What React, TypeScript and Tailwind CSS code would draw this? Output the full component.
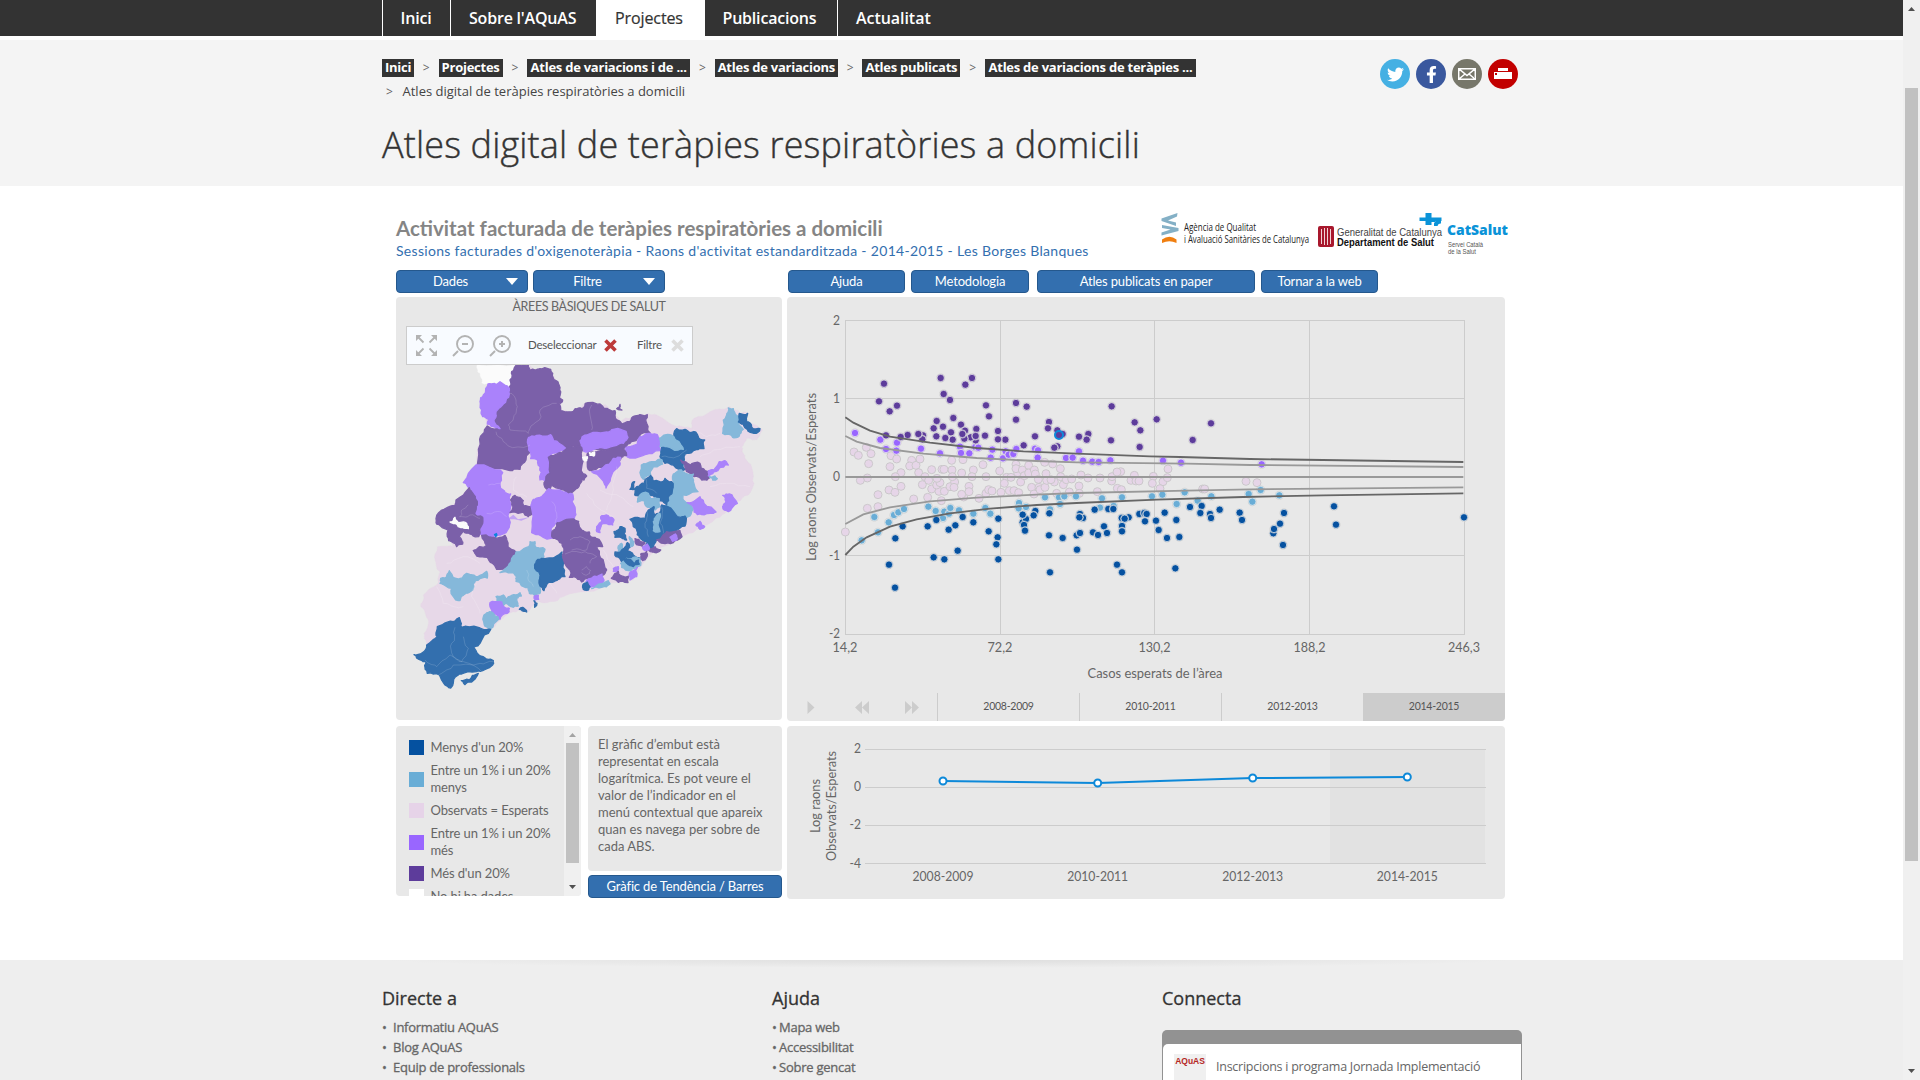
import React from "react";
import { FaTwitter, FaFacebookF } from "react-icons/fa";

const LATO = "font-['Lato','Noto_Sans',sans-serif]";

/* ---------- map ---------- */

const C = {
  navy: "#336fae",
  sky: "#85b8da",
  pink: "#e7d8e8",
  violet: "#aa82fb",
  purple: "#7b60a9",
  white: "#fbfbfb",
};

type Region = [keyof typeof C, string];

const REGIONS: Region[] = [
  ["pink", "262,100 335,60 350,44 385,44 400,60 450,58 465,90 480,115 488,150 484,182 520,184 560,160 600,165 645,185 660,215 700,200 745,190 770,195 830,230 875,235 882,205 930,185 970,178 990,170 1005,180 1020,190 1045,190 1042,215 1080,235 1088,240 1070,270 1040,265 1025,290 1035,325 1055,350 1062,400 1045,435 1010,455 975,490 945,508 900,535 850,558 820,580 760,608 740,628 715,665 700,690 660,700 625,705 560,725 490,740 450,755 410,757 395,770 385,785 360,780 328,790 300,812 272,840 180,860 112,860 80,885 72,850 85,810 62,770 70,735 110,705 120,665 105,630 112,590 160,590 145,540 110,510 130,480 165,460 205,415 190,395 230,340 240,280 260,230 240,160"],
  ["white", "233,44 350,44 335,70 325,112 308,98 262,102 245,98 240,70 233,65"],
  ["purple", "350,44 385,44 390,60 408,60 420,56 452,58 458,70 468,92 476,102 482,125 478,142 488,150 476,162 482,182 502,186 520,184 536,174 552,172 556,160 600,162 612,175 645,182 652,210 666,222 690,214 705,198 742,194 740,220 750,248 720,254 708,272 690,280 670,296 640,300 560,298 505,292 450,268 388,262 386,288 392,298 378,330 360,358 330,362 232,345 238,290 248,252 262,228 290,235 280,215 288,185 315,160 330,120 330,90 335,65"],
  ["violet", "264,102 290,104 300,95 328,115 328,132 310,162 288,185 282,210 300,236 280,230 262,222 266,208 248,200 245,180 240,155 250,135"],
  ["violet", "386,262 410,256 452,254 460,272 500,298 470,308 452,316 445,332 450,360 436,392 420,390 420,350 412,330 392,326 386,300"],
  ["violet", "540,272 560,255 620,246 640,238 678,244 684,262 670,280 640,288 600,292 565,306 545,296"],
  ["violet", "678,292 712,282 720,260 745,250 772,254 778,284 780,302 735,314 690,324 668,312"],
  ["purple", "445,322 478,308 502,290 545,292 550,330 545,395 535,412 515,428 492,420 456,406 444,420 432,398 450,370"],
  ["purple", "565,308 610,302 660,292 680,316 664,322 650,340 610,352 570,362 562,332"],
  ["violet", "575,365 610,352 640,325 662,322 660,345 635,375 618,414 602,384"],
  ["purple", "546,366 560,378 552,390 545,385"],
  ["white", "548,322 562,320 560,332 550,330"],
  ["white", "568,308 584,306 582,318 570,316"],
  ["violet", "228,345 300,360 308,368 300,405 315,428 332,432 330,480 325,492 330,520 318,548 290,558 258,560 240,552 245,510 225,490 232,460 220,432 205,412 190,398"],
  ["purple", "208,413 226,440 232,465 224,490 248,502 248,520 236,560 210,552 190,544 178,560 188,582 170,590 146,572 144,540 110,522 108,506 132,478 165,466 168,450"],
  ["white", "150,516 165,502 175,518 200,520 205,536 188,532 165,520"],
  ["purple", "332,450 345,436 360,442 370,452 372,468 406,466 400,490 385,500 370,486 330,488 340,470"],
  ["violet", "395,475 400,448 425,440 446,416 490,426 518,432 516,455 526,485 522,508 490,512 466,520 454,545 460,562 430,562 395,548"],
  ["purple", "472,518 500,508 536,514 545,540 568,546 572,560 588,565 608,590 590,590 598,614 612,640 620,660 605,676 570,686 545,696 530,684 508,682 510,660 484,636 490,610 486,580 460,565 456,545 470,530"],
  ["purple", "245,556 280,562 315,556 324,590 348,606 335,625 322,652 290,658 278,640 262,622 230,618 220,602 238,590 260,586"],
  ["sky", "348,606 386,590 390,575 405,575 408,592 435,598 430,625 410,648 418,680 416,705 420,730 405,738 388,730 384,712 348,694 350,680 340,668 300,668 325,648 335,625"],
  ["navy", "408,638 425,625 460,624 486,606 490,640 495,680 475,688 462,695 440,704 432,722 420,708 420,676 404,655"],
  ["sky", "122,685 140,680 148,662 158,680 178,686 200,670 228,680 260,664 262,684 226,692 218,720 195,732 180,752 160,740 155,715 120,700"],
  ["sky", "288,740 310,735 320,748 338,735 360,728 364,738 350,745 355,768 340,772 320,760 294,765"],
  ["violet", "270,758 305,756 312,770 328,775 322,790 300,808 288,792 275,790"],
  ["sky", "252,795 268,785 285,797 296,808 272,836 258,830 250,812"],
  ["navy", "112,830 160,815 178,803 184,832 240,834 272,838 240,880 222,892 228,902 250,920 280,932 278,945 248,962 230,965 185,972 165,982 152,1014 130,998 118,975 82,970 75,952 78,935 62,930 42,914 72,905 80,885 112,860"],
  ["navy", "184,992 208,990 235,970 215,996 195,1004"],
  ["navy", "358,778 368,772 380,786 372,784"],
  ["violet", "402,740 415,736 416,748 406,750"],
  ["navy", "402,752 411,760 404,772"],
  ["purple", "650,176 660,163 658,175 666,180"],
  ["sky", "985,174 1000,176 1005,190 1020,200 1015,222 1030,238 1018,258 998,262 968,250 970,210 980,195"],
  ["navy", "1018,190 1043,190 1040,215 1055,232 1080,236 1062,250 1042,238 1030,222 1015,216"],
  ["navy", "830,236 855,238 866,246 890,250 896,264 914,270 912,296 880,302 855,312 850,335 855,358 840,360 820,345 795,340 780,320 785,292 830,290 850,298 820,262"],
  ["sky", "778,265 810,254 828,270 850,298 835,300 800,290 780,290"],
  ["purple", "842,330 872,345 900,340 915,362 928,384 905,390 882,380 860,365"],
  ["violet", "925,378 925,362 942,360 958,335 975,332 985,345 962,352 945,365"],
  ["sky", "928,380 945,378 952,386 938,390"],
  ["sky", "724,345 755,335 786,330 788,342 760,350 752,375 730,388 722,375"],
  ["sky", "820,372 845,360 862,372 880,372 880,395 894,425 845,434 850,450 880,480 870,498 840,500 798,470 800,445 815,435 820,410"],
  ["navy", "735,388 752,376 760,392 785,396 795,385 815,395 816,430 805,440 800,464 770,445 742,430 716,438 704,435 710,410 735,400"],
  ["sky", "712,456 720,435 745,430 752,446 778,446 780,470 765,480 740,470 732,452"],
  ["navy", "695,406 704,395 704,418 690,418"],
  ["violet", "862,458 880,455 900,440 912,460 948,486 930,490 905,494 882,486 878,468"],
  ["violet", "968,436 988,432 1012,460 985,485 968,470 978,455"],
  ["violet", "888,525 900,514 914,530 900,538"],
  ["navy", "690,508 738,504 745,480 762,470 765,495 778,490 785,465 800,468 832,500 855,498 855,528 830,540 795,555 770,570 760,592 738,588 740,574 718,562 710,540 700,530"],
  ["sky", "772,494 780,490 776,515 780,545 760,542 760,515"],
  ["purple", "770,570 800,545 840,542 846,560 820,578 790,580"],
  ["violet", "810,562 826,552 832,565 818,574"],
  ["purple", "745,600 765,590 782,600 765,608"],
  ["violet", "728,590 742,582 748,596 735,602"],
  ["violet", "590,530 605,515 602,500 620,495 628,502 642,510 638,525 610,520 602,532 600,548 590,545"],
  ["navy", "642,545 660,530 675,535 672,552 680,570 668,566 645,562"],
  ["sky", "655,588 665,580 668,600 658,610"],
  ["navy", "645,606 662,604 676,590 682,578 690,592 680,602 700,615 720,625 700,640 678,628 668,638 648,620"],
  ["sky", "662,640 680,625 700,622 724,625 722,646 705,655 685,662 665,652"],
  ["navy", "672,630 690,628 705,640 715,630 718,642 700,650 685,644"],
  ["purple", "705,566 722,575 735,580 726,588 706,578"],
  ["purple", "722,612 740,604 738,625 728,632"],
  ["sky", "688,560 698,572 700,586 692,590"],
  ["violet", "640,656 655,650 656,668 640,664"],
  ["purple", "634,685 655,664 672,680 690,675 684,698 655,697"],
  ["violet", "692,665 712,652 710,680 690,690"],
  ["violet", "558,695 580,680 606,672 612,690 596,706 570,712"],
  ["navy", "550,702 562,696 570,710 565,720 550,718"],
  ["sky", "575,716 625,692 630,702 605,712"],
];

const BORDERS: string[] = [
  "330,130 348,150 348,190 325,225 330,240 385,250",
  "470,160 420,180 418,210 390,235 385,250",
  "575,165 570,195 575,240",
  "288,245 310,275 345,292 390,285",
  "165,832 155,880 160,920 185,935 205,895 190,860",
  "75,930 110,950 150,915 190,935 245,965",
  "115,975 160,945 240,940 280,935",
  "510,570 540,560 570,575 560,600 515,600",
  "495,612 555,605 590,620 570,640",
  "545,660 560,650 572,662 560,675 545,668",
  "205,465 185,480 180,500",
  "178,500 210,495 240,505",
  "265,405 300,400",
  "260,490 300,485 320,500",
  "455,455 470,490 465,520",
  "380,660 385,690 400,710",
  "740,480 735,520 745,560",
  "785,470 780,520 790,550",
  "735,380 740,415 770,430",
  "785,320 830,320 860,300",
];

const PINK_BORDERS: string[] = [
  "560,430 590,470 640,500",
  "600,420 660,440 700,470",
  "650,350 640,420 620,480",
  "900,320 940,300 1020,290",
  "930,410 980,400 1050,410",
  "880,240 920,260 960,250",
  "140,640 190,620 240,640",
  "230,700 215,740 240,790",
  "110,710 130,760 190,770",
  "350,380 340,420 380,440",
  "450,700 470,730",
  "610,600 640,650",
];

/** Subdivides each edge, shifting midpoints by a position-based offset so shared edges agree. */
function rough(src: string, closed = true): string {
  let pts = src.split(" ").map((p) => p.split(",").map(Number));
  for (let pass = 0; pass < 2; pass++) {
    const out: number[][] = [];
    const n = closed ? pts.length : pts.length - 1;
    for (let i = 0; i < n; i++) {
      const a = pts[i];
      const b = pts[(i + 1) % pts.length];
      const mx = (a[0] + b[0]) / 2;
      const my = (a[1] + b[1]) / 2;
      const len = Math.hypot(a[0] - b[0], a[1] - b[1]);
      const amp = Math.min(4, len * 0.16);
      out.push(a);
      if (len > 7) out.push([mx + Math.sin(mx * 12.9 + my * 78.2) * amp, my + Math.sin(mx * 39.3 + my * 11.1) * amp]);
    }
    if (!closed) out.push(pts[pts.length - 1]);
    pts = out;
  }
  return pts.map((p) => p[0].toFixed(1) + "," + p[1].toFixed(1)).join(" ");
}

function MapDrawing() {
  return (
    <svg width="386" height="423" viewBox="-12 -159 1158 1269" className="block">
      {REGIONS.map(([c, p], i) => (
        <polygon key={i} points={rough(p)} fill={C[c]} stroke={C[c]} strokeWidth={i < 2 ? 1 : 4} strokeLinejoin="round" />
      ))}
      {BORDERS.map((p, i) => (
        <polyline key={i} points={rough(p, false)} fill="none" stroke="#fff" strokeOpacity=".22" strokeWidth="2" />
      ))}
      {PINK_BORDERS.map((p, i) => (
        <polyline key={i} points={rough(p, false)} fill="none" stroke="#fff" strokeOpacity=".25" strokeWidth="2" />
      ))}
      <path d="M232 903q14-6 18 8l-14-2z" fill="#e8e8e8" />
      <path d="M281 553l9-5 3 7-6 8z" fill="#0c83dd" />
      <path d="M322 508l18-14 14 14 34-6-24 10-20-4z" fill={C.violet} opacity=".6" />
    </svg>
  );
}

/* ---------- funnel chart ---------- */

type P = [number, number];

const PURPLE: P[] = [[282,281],[267,334],[299,364],[321,347],[452,264],[526,284],[546,264],[461,312],[480,330],[588,346],[597,379],[678,339],[710,350],[440,393],[431,415],[459,410],[490,384],[513,404],[525,422],[559,417],[624,423],[678,389],[777,396],[774,415],[802,421],[965,349],[1034,397],[1051,421],[1100,388],[1263,400],[1208,450],[963,451],[1049,471],[895,432],[890,449],[867,440],[818,432],[802,469],[793,473],[701,466],[735,439],[646,449],[624,448],[585,437],[557,451],[542,442],[523,446],[517,432],[557,438],[483,427],[488,449],[466,444],[439,439],[399,436],[397,448],[385,432],[353,435],[332,441],[288,436]];
const VIOLET: P[] = [[195,429],[271,449],[321,458],[288,477],[319,482],[393,476],[450,490],[510,470],[513,489],[538,490],[556,471],[565,473],[607,479],[602,503],[639,505],[647,484],[656,494],[670,492],[679,477],[735,476],[744,481],[743,503],[828,504],[848,503],[867,484],[879,512],[907,515],[926,516],[961,511],[1119,512],[1173,518],[1415,523]];
const PINK: P[] = [[166,726],[192,486],[205,496],[229,472],[243,491],[236,521],[232,564],[211,571],[264,614],[264,650],[232,655],[300,530],[303,497],[320,507],[333,548],[316,560],[333,589],[297,600],[315,607],[365,511],[359,528],[378,526],[390,507],[386,548],[371,627],[397,584],[405,560],[413,622],[416,571],[425,539],[425,597],[447,604],[456,538],[463,604],[454,632],[440,585],[450,578],[462,538],[441,565],[485,511],[486,540],[480,590],[494,576],[492,592],[519,509],[487,560],[515,549],[521,621],[515,613],[537,589],[537,605],[550,540],[546,560],[579,524],[588,560],[567,625],[588,610],[596,599],[606,603],[629,543],[650,562],[643,580],[633,607],[658,602],[672,602],[686,608],[663,562],[678,523],[683,548],[678,536],[697,540],[692,576],[703,557],[716,526],[716,549],[725,592],[733,540],[736,552],[732,612],[745,568],[747,592],[750,599],[764,517],[768,551],[765,592],[770,571],[788,522],[793,576],[783,569],[800,610],[811,536],[812,560],[820,584],[829,569],[838,606],[845,567],[873,555],[867,588],[894,564],[868,610],[930,564],[922,605],[965,573],[966,560],[982,595],[992,545],[981,546],[994,599],[1023,571],[1033,556],[1038,573],[1047,573],[1090,559],[1087,580],[1119,575],[1132,563],[1134,537],[1110,596],[1238,597],[1244,597],[1368,574],[1401,578]];
const SKY: P[] = [[215,751],[253,681],[264,727],[296,697],[312,675],[325,667],[342,657],[415,650],[437,663],[459,684],[463,665],[477,671],[481,654],[507,661],[550,671],[586,654],[601,671],[687,639],[686,655],[708,651],[765,622],[807,622],[823,619],[858,619],[810,642],[780,658],[936,625],[930,653],[971,648],[996,622],[1086,619],[1117,614],[1160,642],[1184,607],[1223,632],[1264,619],[1376,612],[1412,600],[1387,635],[1468,616]];
const NAVY: P[] = [[338,709],[316,745],[297,824],[315,893],[431,802],[463,808],[413,709],[439,690],[476,719],[496,706],[518,681],[503,782],[550,697],[596,724],[625,686],[623,742],[619,763],[625,808],[698,697],[708,687],[698,674],[702,705],[705,722],[736,663],[731,676],[778,670],[777,736],[780,847],[818,744],[861,779],[860,736],[870,729],[870,672],[879,684],[868,682],[914,659],[909,727],[924,735],[942,709],[951,729],[955,657],[970,657],[995,684],[1016,682],[1004,686],[996,708],[996,724],[981,824],[996,847],[1048,672],[1063,669],[1070,672],[1065,694],[1098,692],[1106,720],[1131,744],[1124,668],[1159,690],[1168,741],[1156,835],[1200,651],[1235,648],[1231,669],[1260,672],[1263,684],[1289,659],[1349,668],[1356,690],[1482,669],[1470,701],[1450,730],[1452,717],[1479,765],[1632,649],[1638,704],[2022,682]];

function Dots({ data, fill }: { data: P[]; fill: string }) {
  return (
    <g>
      {data.map(([x, y], i) => (
        <g key={i}>
          <circle cx={x} cy={y} r="13.5" fill="#c4c4c4" fillOpacity=".7" />
          <circle cx={x} cy={y} r="11" fill={fill} stroke="#f3f3f3" strokeWidth="2" />
        </g>
      ))}
    </g>
  );
}

function Label({ x, y, w, children, size = 14, anchor = "middle", rotate, fill = "#666" }: {
  x: number; y: number; w: number; children: string; size?: number; anchor?: "start" | "middle" | "end"; rotate?: boolean; fill?: string;
}) {
  return (
    <text x={x} y={y} fontSize={size} fill={fill} textAnchor={anchor} textLength={w} lengthAdjust="spacingAndGlyphs" transform={rotate ? `rotate(-90 ${x} ${y})` : undefined}>
      {children}
    </text>
  );
}

function FunnelChart() {
  return (
    <svg width="718" height="396" viewBox="787 297 718 396" className={"block " + LATO}>
      <g stroke="#ccc" fill="none">
        <path d="M845 320.5H1465M845 398.5H1465M845 555.5H1465M845 634.5H1465" />
        <path d="M845.5 320V635M1000.5 320V635M1154.5 320V635M1309.5 320V635M1464.5 320V635" />
      </g>
      <g transform="translate(790 290) scale(.33333)">
        <g>
          {PINK.map(([x, y], i) => (
            <circle key={i} cx={x} cy={y} r="12" fill="#e6d5e8" stroke="#cbc8cb" strokeWidth="3" />
          ))}
        </g>
        <Dots data={SKY} fill="#69add6" />
        <Dots data={VIOLET} fill="#9966ff" />
        <Dots data={NAVY} fill="#0551a0" />
        <Dots data={PURPLE} fill="#5d3c9b" />
        <circle cx="807" cy="435" r="12" fill="#5d3c9b" stroke="#0d89d9" strokeWidth="6" />
        <g fill="none" strokeWidth="5.5">
          <path d="M166 561H2020" stroke="#999" />
          <polyline stroke="#666" points="166,382 190,398 240,422 300,440 420,458 560,474 700,484 860,491 1080,499 1170,501 1380,507 2020,516" />
          <polyline stroke="#999" points="166,438 200,455 270,474 400,491 560,504 740,513 860,517 1190,521 1380,525 2020,531" />
          <polyline stroke="#999" points="166,702 220,673 300,652 420,634 560,623 740,614 860,609 1190,602 1380,598 2020,592" />
          <polyline stroke="#666" points="166,795 190,770 230,742 300,710 380,688 480,670 600,656 740,645 860,639 1100,629 1360,621 1600,616 2020,610" />
        </g>
      </g>
      <Label x={840} y={325} w={7} anchor="end">2</Label>
      <Label x={840} y={403} w={7} anchor="end">1</Label>
      <Label x={840} y={481} w={7} anchor="end">0</Label>
      <Label x={840} y={560} w={11} anchor="end">-1</Label>
      <Label x={840} y={638} w={11} anchor="end">-2</Label>
      <Label x={845} y={652} w={25}>14,2</Label>
      <Label x={1000} y={652} w={25}>72,2</Label>
      <Label x={1154.5} y={652} w={32}>130,2</Label>
      <Label x={1309.5} y={652} w={32}>188,2</Label>
      <Label x={1464} y={652} w={32}>246,3</Label>
      <Label x={1155} y={678} w={135}>Casos esperats de l’àrea</Label>
      <Label x={816} y={477} w={168} size={13} rotate>Log raons Observats/Esperats</Label>
    </svg>
  );
}

function TrendChart() {
  const pts: P[] = [[943, 781], [1097.7, 783], [1252.7, 778], [1407.3, 777]];
  const years = ["2008-2009", "2010-2011", "2012-2013", "2014-2015"];
  return (
    <svg width="718" height="173" viewBox="787 726 718 173" className={"block " + LATO}>
      <rect x="1330" y="750" width="155" height="113" fill="#e2e2e2" />
      <path d="M865 749.5H1486M865 787.5H1486M865 825.5H1486M865 863.5H1486" stroke="#ccc" />
      <polyline points={pts.map((p) => p.join(",")).join(" ")} fill="none" stroke="#0d89d9" strokeWidth="2" />
      {pts.map(([x, y], i) => (
        <circle key={i} cx={x} cy={y} r="3.500" fill="#fff" stroke="#0d89d9" strokeWidth="2" />
      ))}
      {years.map((t, i) => (
        <Label key={t} x={pts[i][0]} y={881} w={61}>{t}</Label>
      ))}
      <Label x={861} y={753} w={7} anchor="end">2</Label>
      <Label x={861} y={791} w={7} anchor="end">0</Label>
      <Label x={861} y={829} w={11.5} anchor="end">-2</Label>
      <Label x={861} y={868} w={11.5} anchor="end">-4</Label>
      <Label x={820} y={806} w={54} size={13} rotate>Log raons</Label>
      <Label x={836} y={806} w={110} size={13} rotate>Observats/Esperats</Label>
    </svg>
  );
}

/* ---------- logos and icons ---------- */

function Logos() {
  return (
    <svg width="350" height="45" viewBox="1159 211 350 45" className="block">
      <g fill="#84b0c6">
        <path d="M1177.500 213l-.5 3.500-9 4 8 2v3.500l-14.500-5v-2.500z" />
        <path d="M1162 225l16.500 3v3l-17 4.500v-3l9-3-8.500-1.500z" />
      </g>
      <path d="M1162 243v-3.500q7.500-5.500 14.500 0v3.500q-7-3.500-14.500 0z" fill="#f07f10" />
      <g className="font-['Open_Sans',sans-serif]">
        <Label x={1184} y={230.5} w={72} size={10.5} anchor="start" fill="#222">Agència de Qualitat</Label>
        <Label x={1184} y={242.5} w={125} size={10.5} anchor="start" fill="#222">i Avaluació Sanitàries de Catalunya</Label>
      </g>
      <rect x="1318" y="226" width="16" height="21" rx="2" fill="#a8182d" />
      <path d="M1321.500 229v15M1324.500 228v17M1327.500 228v17M1330.500 229v15" stroke="#f1d3d6" />
      <g className="font-['Liberation_Sans',sans-serif]">
        <Label x={1337} y={235.5} w={105} size={11} anchor="start" fill="#444">Generalitat de Catalunya</Label>
        <g className="font-bold">
          <Label x={1337} y={246} w={97} size={11} anchor="start" fill="#111">Departament de Salut</Label>
        </g>
        <g className="font-['Open_Sans',sans-serif] font-extrabold">
          <Label x={1447} y={235} w={61} size={13.5} anchor="start" fill="#0b93d8">CatSalut</Label>
        </g>
        <Label x={1448} y={247} w={35} size={7} anchor="start" fill="#555">Servei Català</Label>
        <Label x={1448} y={254} w={28} size={7} anchor="start" fill="#555">de la Salut</Label>
      </g>
      <g fill="#0b93d8">
        <path d="M1425.500 213h6v4.500h10v3.500h-6v1h-4v3h-6v-4h-6v-3.500h6z" />
        <path d="M1434 226v-2.500q1-3 4-3h3v3q-3-.5-3.500 2.500z" />
      </g>
    </svg>
  );
}

function Magnifier({ plus }: { plus?: boolean }) {
  return (
    <svg width="22" height="22" viewBox="0 0 22 22" fill="none" stroke="#b3b3b3">
      <circle cx="13" cy="9" r="8" strokeWidth="1.900" />
      <path d="M1 21l5-5" strokeWidth="2" />
      <path d={plus ? "M10 9h6M13 6v6" : "M10 9h6"} strokeWidth="2" />
    </svg>
  );
}

function Cross({ color }: { color: string }) {
  return (
    <svg width="13" height="13" viewBox="0 0 13 13" fill="none" stroke={color} strokeWidth="3.600">
      <path d="M1.500 1.500l10 10M11.500 1.500l-10 10" />
    </svg>
  );
}

function MapToolbar() {
  return (
    <div className="absolute left-[10px] top-[29px] flex h-[39px] w-[287px] items-center border border-[#ccc] bg-[#f8fbff] pl-[9px] text-[11.5px] tracking-[-0.2px] text-[#555]">
      <svg width="21" height="21" viewBox="0 0 21 21" fill="#b3b3b3" stroke="#b3b3b3" strokeWidth="1.800">
        <path d="M0 0h6l-6 6zM21 0v6l-6-6zM0 21v-6l6 6zM21 21h-6l6-6z" stroke="none" />
        <path d="M2 2l5.500 5.500M19 2l-5.500 5.500M2 19l5.500-5.500M19 19l-5.500-5.500" />
      </svg>
      <span className="ml-[15px]"><Magnifier /></span>
      <span className="ml-[15px]"><Magnifier plus /></span>
      <span className="-mt-px ml-[17px] w-[68px]">Deseleccionar</span>
      <span className="ml-[8px]"><Cross color="#bd3a3a" /></span>
      <span className="-mt-px ml-[20px] w-[26px]">Filtre</span>
      <span className="ml-[8px]"><Cross color="#ddd" /></span>
    </div>
  );
}

function Social() {
  const round = "flex size-[30px] items-center justify-center rounded-full text-white";
  return (
    <div className="flex gap-[6px]">
      <span className={round + " bg-[#45b0e3]"}><FaTwitter size={17} /></span>
      <span className={round + " bg-[#3a589e]"}><FaFacebookF size={17} /></span>
      <span className={round + " bg-[#77776a]"}>
        <svg width="18" height="12" viewBox="0 0 18 12" fill="none" stroke="#fff" strokeWidth="1.500">
          <path d="M.7.7h16.600v10.600H.7zM.7.7L9 7.500 17.300.7M.7 11.300L7 6M17.300 11.300L11 6" />
        </svg>
      </span>
      <span className={round + " bg-[#c20000]"}>
        <svg width="18" height="12" viewBox="0 0 18 12" fill="#fff">
          <path d="M4 0h10v3H4zM0 4h18v7H0z" />
          <path d="M1 5h2v2H1z" fill="#c20000" />
        </svg>
      </span>
    </div>
  );
}

/* ---------- page parts ---------- */

const BTN = "flex h-[23px] items-center justify-center rounded-[4px] border border-[#25588d] bg-[#336faf] text-[13px] tracking-[-0.15px] text-white";

function Nav() {
  const item = "flex h-full items-center whitespace-nowrap border-l border-white pb-[1px]";
  return (
    <nav className="h-[36px] bg-[#333] pl-[382px] text-[16px] font-semibold tracking-[-0.2px] text-white">
      <div className="flex h-full">
        <a className={item + " w-[68px] pl-[17.500px]"}>Inici</a>
        <a className={item + " w-[146px] pl-[18px]"}>Sobre l'AQuAS</a>
        <a className={item + " w-[109px] bg-white pl-[18px] font-medium tracking-[-0.1px] text-[#333] [-webkit-text-stroke:0.2px]"}>Projectes</a>
        <a className="flex h-full w-[132px] items-center whitespace-nowrap pb-[1px] pl-[17.500px]">Publicacions</a>
        <a className={item + " pl-[18px] tracking-[-0.05px]"}>Actualitat</a>
      </div>
    </nav>
  );
}

function Crumb({ w, children }: { w: number; children: string }) {
  return (
    <span style={{ width: w }} className="flex h-[18px] items-center justify-center whitespace-nowrap bg-[#333] text-[13px] font-bold tracking-[-0.25px] text-white">
      {children}
    </span>
  );
}

const Sep = () => <span className="w-[24.600px] text-center text-[12px] text-[#666]">&gt;</span>;

function Header() {
  return (
    <header className="mt-[4px] h-[146px] bg-[#f4f4f4] pl-[382px] pt-[19px]">
      <div className="flex w-[1136px] justify-between">
        <div>
          <div className="flex h-[18px] items-center">
            <Crumb w={32}>Inici</Crumb><Sep />
            <Crumb w={64}>Projectes</Crumb><Sep />
            <Crumb w={163}>Atles de variacions i de ...</Crumb><Sep />
            <Crumb w={123}>Atles de variacions</Crumb><Sep />
            <Crumb w={98}>Atles publicats</Crumb><Sep />
            <Crumb w={211}>Atles de variacions de teràpies ...</Crumb>
          </div>
          <div className="mt-[6px] flex h-[18px] items-center pl-[4px] text-[13px] text-[#444]">
            <span className="w-[16.500px] text-[12px] text-[#666]">&gt;</span>
            <span>Atles digital de teràpies respiratòries a domicili</span>
          </div>
        </div>
        <Social />
      </div>
      <h1 className="mt-[19px] whitespace-nowrap text-[36px] font-light leading-[50px] tracking-[0.150px] text-[#333] [-webkit-text-stroke:0.4px]">Atles digital de teràpies respiratòries a domicili</h1>
    </header>
  );
}

const LEGEND: [string, string][] = [
  ["bg-[#0551a0]", "Menys d'un 20%"],
  ["bg-[#69add6]", "Entre un 1% i un 20% menys"],
  ["bg-[#e6d3e8]", "Observats = Esperats"],
  ["bg-[#9966ff]", "Entre un 1% i un 20% més"],
  ["bg-[#5d3c9b]", "Més d'un 20%"],
  ["bg-white", "No hi ha dades"],
];

function Legend() {
  return (
    <div className="flex h-[170px] w-[185px] justify-between overflow-hidden rounded-[4px] bg-[#e8e8e8]">
      <ul className="flex flex-col gap-[6px] pl-[13px] pt-[13px]">
        {LEGEND.map(([c, t]) => (
          <li key={t} className="flex shrink-0 items-center">
            <i className={"size-[15px] shrink-0 " + c} />
            <span className="ml-[6.500px] w-[126px] text-[13px] leading-[17px] tracking-[-0.130px] text-[#666]">{t}</span>
          </li>
        ))}
      </ul>
      <div className="flex w-[17px] flex-col items-center bg-[#f0f0f0]">
        <svg width="17" height="17" viewBox="0 0 17 17"><path d="M5 11h7L8.500 7z" fill="#a3a3a3" /></svg>
        <div className="h-[120px] w-[13px] bg-[#c1c1c1]" />
        <svg width="17" height="17" viewBox="0 0 17 17" className="mt-auto"><path d="M5 6h7L8.500 10z" fill="#505050" /></svg>
      </div>
    </div>
  );
}

function TimeBar() {
  return (
    <div className="flex h-[28px] text-[10.500px] tracking-[-0.250px] text-[#555]">
      <div className="w-[150px]">
        <svg width="150" height="28" viewBox="0 0 150 28" fill="#ccc">
          <path d="M20.500 8v13l7-6.500zM75 8v13l-7-6.500zM82 8v13l-7-6.500zM118 8v13l7-6.500zM125 8v13l7-6.500z" />
        </svg>
      </div>
      {["2008-2009", "2010-2011", "2012-2013"].map((t) => (
        <div key={t} className="flex w-[142px] items-center justify-center border-l border-[#ccc]">{t}</div>
      ))}
      <div className="flex w-[142px] items-center justify-center bg-[#ccc]">2014-2015</div>
    </div>
  );
}

function Dashboard() {
  return (
    <main className={"h-[774px] pl-[396px] pt-[27px] " + LATO}>
      <div className="flex h-[57px] w-[1113px] justify-between">
        <div className="whitespace-nowrap pt-[3px]">
          <h2 className="text-[20.500px] font-bold leading-[24px] text-[#858585]">Activitat facturada de teràpies respiratòries a domicili</h2>
          <p className="mt-px text-[14px] leading-[20px] tracking-[0.310px] text-[#336faf]">Sessions facturades d'oxigenoteràpia - Raons d'activitat estandarditzada - 2014-2015 - Les Borges Blanques</p>
        </div>
        <div className="-mt-[2px]"><Logos /></div>
      </div>
      <div className="flex h-[27px]">
        {["Dades", "Filtre"].map((t) => (
          <button key={t} className={BTN + " relative mr-[5px] w-[132px] pr-[23px]"}>
            {t}
            <svg width="12" height="7" viewBox="0 0 12 7" className="absolute right-[9px] top-[7px]"><path d="M0 0h12L6 7z" fill="#fff" /></svg>
          </button>
        ))}
        <button className={BTN + " ml-[118px] w-[117px]"}>Ajuda</button>
        <button className={BTN + " ml-[6px] w-[118px]"}>Metodologia</button>
        <button className={BTN + " ml-[8px] w-[218px]"}>Atles publicats en paper</button>
        <button className={BTN + " ml-[6px] w-[117px]"}>Tornar a la web</button>
      </div>
      <div className="flex gap-[5px]">
        <div className="w-[386px]">
          <section className="relative h-[423px] overflow-hidden rounded-[4px] bg-[#e8e8e8]">
            <MapDrawing />
            <h3 className="absolute inset-x-0 top-0 text-center text-[12.500px] leading-[19px] tracking-[-0.370px] text-[#666]">ÀREES BÀSIQUES DE SALUT</h3>
            <MapToolbar />
          </section>
          <div className="mt-[6px] flex justify-between">
            <Legend />
            <div className="w-[194px]">
              <p className="h-[145px] whitespace-nowrap rounded-[4px] bg-[#e8e8e8] pl-[10px] pt-[10px] text-[13px] leading-[17px] text-[#666]">
                El gràfic d’embut està<br />representat en escala<br />logarítmica. Es pot veure el<br />valor de l’indicador en el<br />menú contextual que apareix<br />quan es navega per sobre de<br />cada ABS.
              </p>
              <button className={BTN + " mt-[4px] w-full"}>Gràfic de Tendència / Barres</button>
            </div>
          </div>
        </div>
        <div className="w-[718px]">
          <section className="h-[424px] overflow-hidden rounded-[4px] bg-[#e8e8e8]">
            <FunnelChart />
            <TimeBar />
          </section>
          <section className="mt-[5px] h-[173px] overflow-hidden rounded-[4px] bg-[#e8e8e8]">
            <TrendChart />
          </section>
        </div>
      </div>
    </main>
  );
}

function Footer() {
  const h = "text-[18px] font-medium leading-[24px] text-[#333] [-webkit-text-stroke:0.3px]";
  const list = "mt-[7px] text-[13px] font-medium leading-[20px] tracking-[-0.250px] text-[#666] [-webkit-text-stroke:0.3px]";
  return (
    <footer className="h-[120px] bg-[#eee]">
      <div className="ml-[382px] h-[8px] w-[1136px] bg-[radial-gradient(ellipse_at_top,#dedede,#eee_70%)]" />
      <div className="flex pl-[382px] pt-[18px]">
        <div className="w-[390px]">
          <h3 className={h}>Directe a</h3>
          <ul className={list}>
            {["Informatiu AQuAS", "Blog AQuAS", "Equip de professionals"].map((t) => (
              <li key={t} className="flex"><span className="w-[11px]">•</span>{t}</li>
            ))}
          </ul>
        </div>
        <div className="w-[390px]">
          <h3 className={h}>Ajuda</h3>
          <ul className={list}>
            {["Mapa web", "Accessibilitat", "Sobre gencat"].map((t) => (
              <li key={t} className="flex"><span className="w-[7px]">•</span>{t}</li>
            ))}
          </ul>
        </div>
        <div className="w-[360px]">
          <h3 className={h}>Connecta</h3>
          <div className="mt-[20px] h-[50px] rounded-t-[5px] bg-[#929292] px-px pt-[14px]">
            <div className="flex h-[36px] rounded-tl-[5px] bg-white pl-[11px] pt-[10px]">
              <div className="h-[26px] w-[32px] bg-[#f0f0f0] pt-[2px] text-center font-['Liberation_Sans',sans-serif] text-[8.500px] font-bold leading-[10px] text-[#b5271f]">AQuAS</div>
              <span className="ml-[10px] mt-[3px] text-[12.500px] leading-[20px] tracking-[-0.250px] text-[#666]">Inscripcions i programa Jornada Implementació</span>
            </div>
          </div>
        </div>
      </div>
    </footer>
  );
}

export default function App() {
  return (
    <div className="flex h-[1080px] w-[1920px] overflow-hidden bg-white font-['Open_Sans','Noto_Sans',sans-serif]">
      <div className="w-[1903px]">
        <Nav />
        <Header />
        <Dashboard />
        <Footer />
      </div>
      <div className="flex w-[17px] flex-col items-center bg-[#f0f0f0]">
        <svg width="17" height="17" viewBox="0 0 17 17"><path d="M5 11h7L8.500 7z" fill="#505050" /></svg>
        <div className="mt-[71px] h-[773px] w-[13px] bg-[#c1c1c1]" />
        <svg width="17" height="17" viewBox="0 0 17 17" className="mt-auto"><path d="M5 6h7L8.500 10z" fill="#505050" /></svg>
      </div>
    </div>
  );
}
